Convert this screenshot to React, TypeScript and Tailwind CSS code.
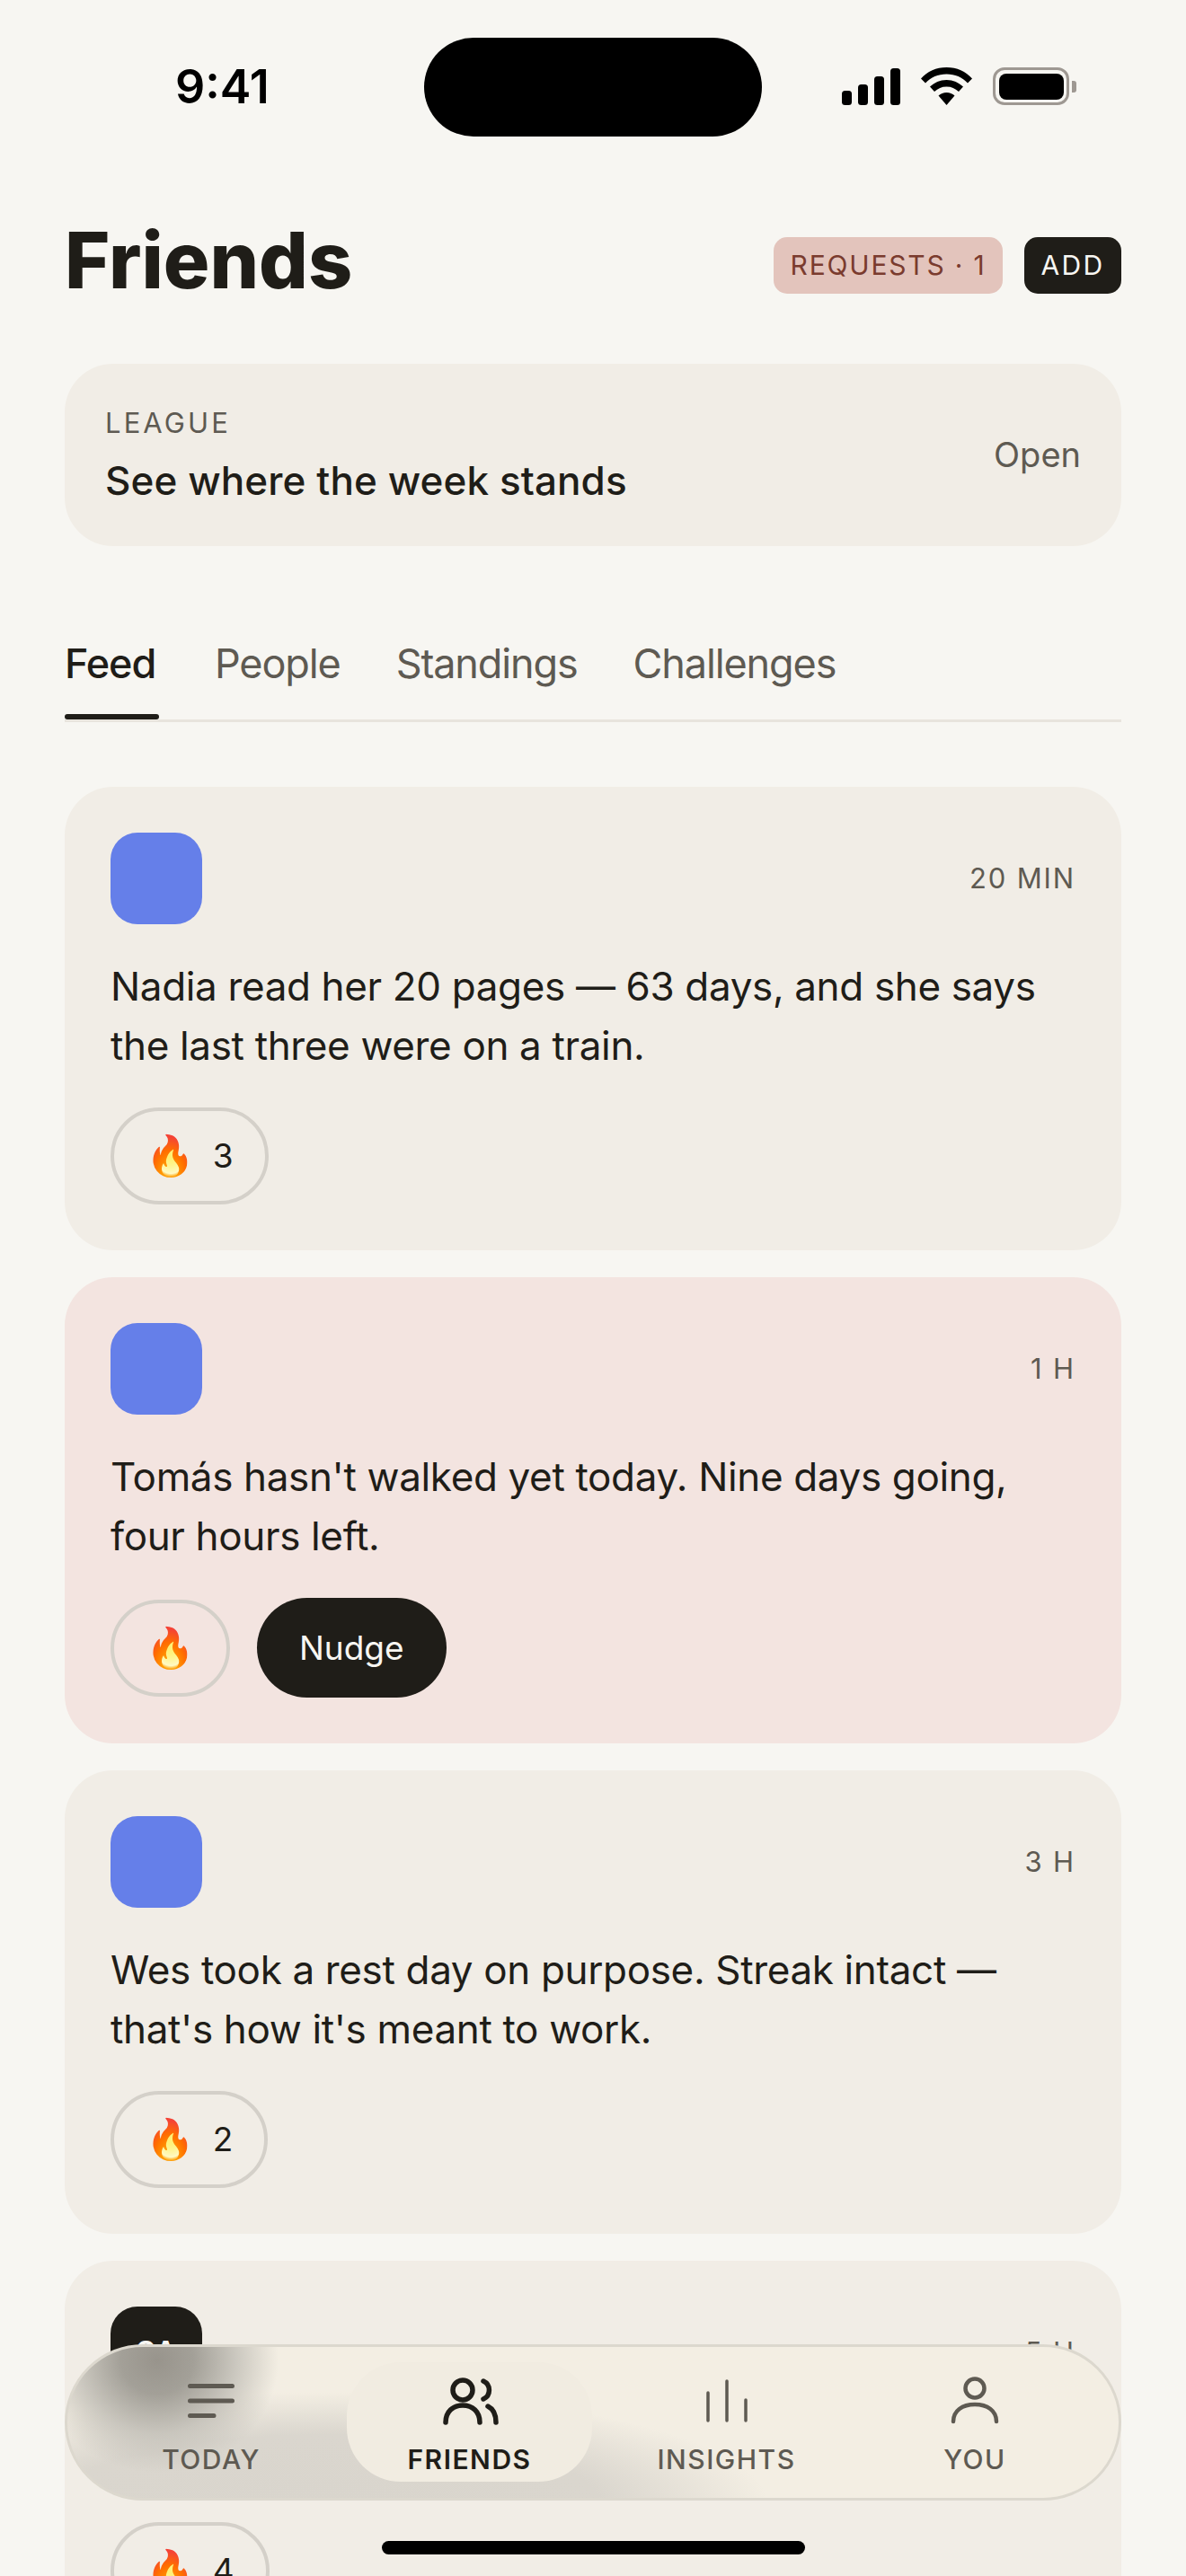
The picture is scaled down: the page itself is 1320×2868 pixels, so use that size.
import React from 'react';

const BODY = "font-['Inter','Liberation_Sans',sans-serif]";

const feed = [
  { id: 'nadia', time: '20 MIN', text: ['Nadia read her 20 pages — 63 days, and she says', 'the last three were on a train.'], count: '3' },
  { id: 'tomas', time: '1 H', text: ["Tomás hasn't walked yet today. Nine days going,", 'four hours left.'], nudge: true, tint: true },
  { id: 'wes', time: '3 H', text: ['Wes took a rest day on purpose. Streak intact —', "that's how it's meant to work."], count: '2' },
  // body line of this one sits fully behind the tab bar
  { id: 'sa', time: '5 H', text: [], count: '4', initials: 'SA' },
];

const StatusIcons = () => (
  <div className="flex items-center">
    <svg width="65" height="41" viewBox="0 0 65 41" fill="#000" className="mr-[23px]">
      <rect x="0" y="25" width="11" height="16" rx="3.5" />
      <rect x="18" y="18" width="11" height="23" rx="3.5" />
      <rect x="36" y="9" width="11" height="32" rx="3.5" />
      <rect x="54" y="0" width="11" height="41" rx="3.5" />
    </svg>
    <svg width="57" height="42" viewBox="0 0 57 42" fill="#000" className="mr-[23px]">
      <path d="M28.5 0C40 0 50 4.500 57 12.500L52 17.500C46 11 38 7.500 28.500 7.500C19 7.500 11 11 5 17.500L0 12.500C7 4.500 17 0 28.500 0Z" />
      <path d="M28.500 14C36 14 42 17 47 21.500L42 27C38 23.500 34 21.500 28.500 21.500C23 21.500 19 23.500 15 27L10 21.500C15 17 21 14 28.500 14Z" />
      <path d="M28.500 28C32 28 35 29.200 37.500 31.500L28.500 42L19.500 31.500C22 29.200 25 28 28.500 28Z" />
    </svg>
    <div className="flex items-center gap-[3px]">
      <div className="w-[85px] h-[42px] rounded-[13px] border-[3.5px] border-[#9e9892] p-[3.5px]">
        <div className="w-full h-full rounded-[8px] bg-black" />
      </div>
      <div className="w-[5px] h-[13px] rounded-r-[3px] bg-[#9e9892]" />
    </div>
  </div>
);

const Flame = () => (
  <span className="text-[44px] leading-none font-['Noto_Color_Emoji','Apple_Color_Emoji',sans-serif]">🔥</span>
);

const FeedCard = ({ item }: { item: (typeof feed)[number] }) => (
  <div className={`rounded-[54px] p-[51px] ${item.tint ? 'bg-[#f3e4e0]' : 'bg-[#f1ede6]'}`}>
    <div className="flex items-center justify-between">
      {item.initials ? (
        <div className="w-[102px] h-[102px] rounded-[30px] bg-[#1f1d18] text-[#f7f6f2] flex items-center justify-center text-[33px] font-semibold">
          {item.initials}
        </div>
      ) : (
        <div className="w-[102px] h-[102px] rounded-[30px] bg-[#657fe9]" />
      )}
      <div className="text-[31px] tracking-[0.06em] text-[#5e5a52]">{item.time}</div>
    </div>
    <div className="mt-[36px] min-h-[66px] text-[44px] leading-[66px] tracking-[-0.008em] text-[#1f1d18]">
      {item.text.map((line) => (
        <div key={line}>{line}</div>
      ))}
    </div>
    <div className="mt-[36px] flex items-center gap-[30px]">
      <div className="h-[108px] px-[35px] rounded-full border-[4.5px] border-[#d4d0c9] flex items-center gap-[20px]">
        <Flame />
        {item.count && <span className="text-[37px] text-[#1f1d18]">{item.count}</span>}
      </div>
      {item.nudge && (
        <div className="h-[111px] w-[211px] rounded-full bg-[#1f1d18] text-[#f7f6f2] text-[37px] flex items-center justify-center">
          Nudge
        </div>
      )}
    </div>
  </div>
);

const TodayIcon = () => (
  <svg width="52" height="38" viewBox="0 0 52 38" fill="none" stroke="#5e5a52" strokeWidth="5" strokeLinecap="round">
    <path d="M2.500 2.500H49.500M2.500 19H49.500M2.500 35.500H29" />
  </svg>
);

const FriendsIcon = () => (
  <svg width="66" height="56" viewBox="0 0 66 56" fill="none" stroke="#1f1d18" strokeWidth="5.500" strokeLinecap="round">
    <circle cx="25" cy="16" r="11" />
    <path d="M6 52C6 40 14 33 25 33C36 33 44 40 44 52" />
    <path d="M48 6A11 11 0 0 1 48 26" />
    <path d="M53 34C59 37 62 44 62 52" />
  </svg>
);

const InsightsIcon = () => (
  <svg width="48" height="48" viewBox="0 0 48 48" fill="none" stroke="#5e5a52" strokeWidth="3.500" strokeLinecap="round">
    <path d="M3 15V46M24 2V46M45 23V46" />
  </svg>
);

const YouIcon = () => (
  <svg width="54" height="54" viewBox="0 0 54 54" fill="none" stroke="#5e5a52" strokeWidth="4.500" strokeLinecap="round">
    <circle cx="27" cy="13" r="10.500" />
    <path d="M3 50C3 38 13 31 27 31C41 31 51 38 51 50" />
  </svg>
);

const navItems = [
  { label: 'TODAY', w: 'w-[290px]', icon: <TodayIcon /> },
  { label: 'FRIENDS', w: 'w-[273px]', icon: <FriendsIcon />, active: true },
  { label: 'INSIGHTS', w: 'w-[287px]', icon: <InsightsIcon /> },
  { label: 'YOU', w: 'w-[254px]', icon: <YouIcon /> },
];

export default function App() {
  return (
    <div className={`relative h-[2868px] w-[1320px] overflow-hidden bg-[#f7f6f2] text-[#1f1d18] ${BODY}`}>
      {/* status bar */}
      <div className="h-[152px] pt-[42px] pl-[195px] flex items-start">
        <div className="w-[105px] mt-[29px] text-[52px] leading-[52px] font-semibold text-black">9:41</div>
        <div className="w-[376px] h-[110px] ml-[172px] rounded-full bg-black" />
        <div className="mt-[33px] ml-[89px]">
          <StatusIcons />
        </div>
      </div>

      <div className="px-[72px]">
        {/* title row */}
        <div className="mt-[88px] flex items-center justify-between h-[100px]">
          <h1 className="text-[86px] leading-[100px] font-extrabold">Friends</h1>
          <div className="mt-[11px] flex items-center gap-[24px]">
            <div className="h-[63px] w-[255px] rounded-[15px] bg-[#e3c4bc] text-[#7a3b2e] text-[30px] tracking-[0.06em] flex items-center justify-center">
              REQUESTS · 1
            </div>
            <div className="h-[63px] w-[108px] rounded-[15px] bg-[#1f1d18] text-[#f7f6f2] text-[30px] tracking-[0.08em] flex items-center justify-center">
              ADD
            </div>
          </div>
        </div>

        {/* league */}
        <div className="mt-[65px] h-[203px] rounded-[54px] bg-[#f1ede6] px-[45px] flex items-center justify-between">
          <div>
            <div className="text-[31px] leading-[40px] tracking-[0.1em] text-[#5e5a52]">LEAGUE</div>
            <div className="mt-[16px] text-[44px] leading-[56px] tracking-[0.002em] font-medium">See where the week stands</div>
          </div>
          <div className="text-[38px] text-[#5e5a52]">Open</div>
        </div>

        {/* tabs */}
        <div className="mt-[75px] h-[121px] border-b-[3px] border-[#e8e4dd] flex gap-[62px] text-[45px] tracking-[-0.025em] text-[#5e5a52]">
          <div className="relative w-[105px] pt-[22px] text-[#1f1d18] font-medium">
            Feed
            <div className="absolute left-0 right-0 bottom-0 h-[6px] rounded-full bg-[#1f1d18]" />
          </div>
          <div className="pt-[22px]">People</div>
          <div className="pt-[22px]">Standings</div>
          <div className="pt-[22px]">Challenges</div>
        </div>

        {/* feed */}
        <div className="mt-[72px] flex flex-col gap-[30px]">
          {feed.map((item) => (
            <FeedCard key={item.id} item={item} />
          ))}
        </div>
      </div>

      {/* tab bar, the frosted smear of the card behind it is painted in */}
      <div className="absolute left-[72px] top-[2610px] w-[1176px] h-[174px] rounded-full border-[3px] border-[#dcd8ce] bg-[#f3eee3] bg-[radial-gradient(ellipse_135px_125px_at_100px_15px,#98948c_0%,#a3a098_30%,rgba(196,193,185,0.85)_65%,rgba(222,218,209,0)_100%),radial-gradient(ellipse_490px_125px_at_290px_175px,#d9d5cd_0%,#dad6ce_62%,rgba(218,214,206,0)_100%)] px-[15px] pt-[17px] flex gap-[6px]">
        {navItems.map((n) => (
          <div
            key={n.label}
            className={`${n.w} h-[133px] rounded-[60px] flex flex-col items-center ${n.active ? 'bg-[#f1ece1] text-[#1f1d18] font-semibold' : 'text-[#5e5a52] font-medium'}`}
          >
            <div className="h-[84px] flex items-center justify-center pt-[2px]">{n.icon}</div>
            <div className="text-[30px] leading-[36px] tracking-[0.05em] mt-[6px]">{n.label}</div>
          </div>
        ))}
      </div>

      {/* home indicator */}
      <div className="absolute left-[425px] top-[2829px] w-[471px] h-[15px] rounded-full bg-black" />
    </div>
  );
}
